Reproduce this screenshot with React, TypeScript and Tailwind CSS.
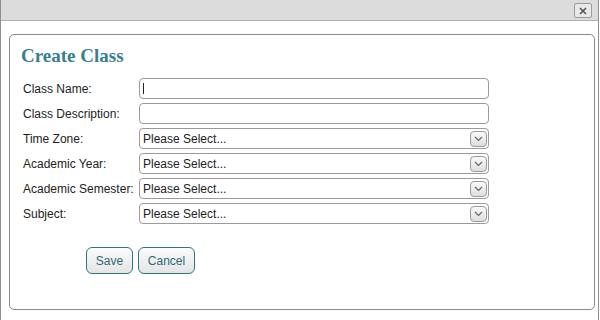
const fields = [
  { label: 'Class Name:', kind: 'text', caret: true },
  { label: 'Class Description:', kind: 'text' },
  { label: 'Time Zone:', kind: 'select' },
  { label: 'Academic Year:', kind: 'select' },
  { label: 'Academic Semester:', kind: 'select' },
  { label: 'Subject:', kind: 'select' },
];

const SelectArrow = () => (
  <span className="grid h-[16px] w-[17px] place-items-center rounded-[4px] border border-[#9a9a9a] bg-gradient-to-b from-[#fafafa] to-[#dedede]">
    <svg width="9" height="6" viewBox="0 0 9 6" fill="none">
      <path d="M1 1l3.5 3.5L8 1" stroke="#666" strokeWidth="1.2" />
    </svg>
  </span>
);

export default function App() {
  return (
    <div
      className="h-[320px] w-[599px] overflow-hidden border-x border-[#8f8f8f] bg-white text-[12px] text-[#222]"
      style={{ fontFamily: '"Liberation Sans", Arial, sans-serif' }}
    >
      <div className="flex h-[21px] items-start justify-end border-b border-[#b0b0b0] bg-[#dcdcdc] pr-[6px] pt-[3px]">
        <button className="grid h-[15px] w-[18px] place-items-center rounded-[2px] border border-[#9a9a9a] bg-[#e8e8e8]">
          <svg width="8" height="8" viewBox="0 0 8 8">
            <path d="M1 1l6 6M7 1l-6 6" stroke="#555" strokeWidth="1.6" />
          </svg>
        </button>
      </div>

      <div className="ml-[8px] mt-[13px] h-[276px] w-[586px] rounded-[5px] border border-[#8a8a8a] pl-[11px]">
        <h2
          className="pt-[10px] text-[19px] font-bold leading-[22px] text-[#37808f]"
          style={{ fontFamily: '"Liberation Serif", "Times New Roman", serif' }}
        >
          Create Class
        </h2>

        <div className="mt-[11px] grid grid-cols-[116px_350px] gap-y-[4px] pl-[2px]">
          {fields.map((f) => (
            <div key={f.label} className="contents">
              <label className="flex h-[21px] items-center">{f.label}</label>
              {f.kind === 'text' ? (
                <div className="flex h-[21px] items-center rounded-[4px] border border-[#9a9a9a] pl-[3px]">
                  {f.caret && <span className="h-[11px] w-px bg-[#222]" />}
                </div>
              ) : (
                <div className="flex h-[21px] items-center justify-between rounded-[4px] border border-[#9a9a9a] pl-[3px] pr-[1px]">
                  <span>Please Select...</span>
                  <SelectArrow />
                </div>
              )}
            </div>
          ))}
        </div>

        <div className="ml-[65px] mt-[23px] flex gap-[5px]">
          <button className="h-[27px] w-[47px] rounded-[6px] border border-[#2f7585] bg-gradient-to-b from-[#fcfcfc] to-[#e4e4e4] text-[12px] text-[#2d6878]">
            Save
          </button>
          <button className="h-[27px] w-[57px] rounded-[6px] border border-[#2f7585] bg-gradient-to-b from-[#fcfcfc] to-[#e4e4e4] text-[12px] text-[#2d6878]">
            Cancel
          </button>
        </div>
      </div>
    </div>
  );
}
